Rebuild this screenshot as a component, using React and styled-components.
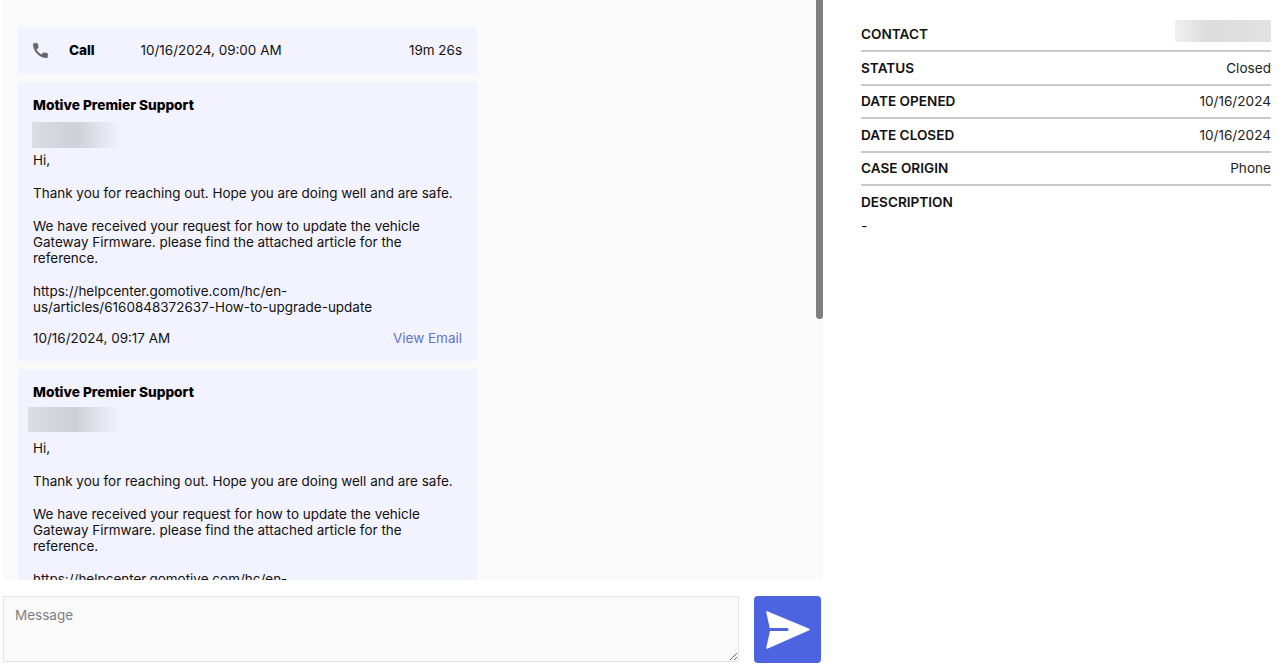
import React from "react";
import styled, { createGlobalStyle } from "styled-components";

const Global = createGlobalStyle`
  html, body { margin: 0; padding: 0; background: #fff; }
  body { font-family: Inter, "Liberation Sans", sans-serif; color: #111; overflow: hidden; }
  * { box-sizing: border-box; }
`;

const Page = styled.div`
  display: flex;
  height: 669px;
  width: 1285px;
  overflow: hidden;
`;
const ChatColumn = styled.div`
  width: 823px;
  padding-left: 3px;
  display: flex;
  flex-direction: column;
  flex: none;
`;
const Feed = styled.div`
  position: relative;
  height: 580px;
  flex: none;
  overflow: hidden;
  background: #fafafa;
  padding: 27px 0 0 15px;
  display: flex;
  flex-direction: column;
  gap: 8px;
`;
const ScrollThumb = styled.div`
  position: absolute;
  top: -8px;
  right: 0;
  width: 7px;
  height: 327px;
  background: #7f7f7f;
  border-radius: 0 0 4px 4px;
`;
const Card = styled.div`
  width: 459px;
  flex: none;
  background: #f3f3ff;
  font-size: 13.47px;
  line-height: 16.35px;
  color: #111;
`;
const CallCard = styled(Card)`
  height: 47px;
  display: flex;
  align-items: center;
  padding: 0 15px;
`;
const CallIcon = styled.svg`
  width: 19px;
  height: 19px;
  fill: #666;
  stroke: #666;
  stroke-width: 0.8;
  stroke-linejoin: round;
  margin-left: -2px;
  flex: none;
`;
const CallLabel = styled.span`
  font-weight: 800;
  font-size: 13.5px;
  margin-left: 19px;
  width: 71.5px;
  color: #000;
`;
const CallDuration = styled.span`
  margin-left: auto;
`;
const MailCard = styled(Card)`
  padding: 15px 15px 0;
  height: 279px;
`;
const Sender = styled.div`
  font-weight: 800;
  font-size: 13.7px;
  color: #000;
`;
const Redaction = styled.div`
  height: ${(p) => p.$h}px;
  width: ${(p) => p.$w}px;
  margin: ${(p) => p.$m};
  background: linear-gradient(90deg, #dcdce3 0%, #cfcfd7 50%, #f3f3ff 100%);
  filter: blur(0.5px);
`;
const Body = styled.div`
  white-space: pre-wrap;
  overflow-wrap: anywhere;
`;
const MailFoot = styled.div`
  display: flex;
  justify-content: space-between;
  margin-top: 14px;
`;
const MailLink = styled.a`
  color: #5f74c9;
`;
const Composer = styled.div`
  flex: 1;
  display: flex;
  align-items: flex-start;
  padding-top: 16px;
  gap: 15px;
`;
const MessageBox = styled.textarea`
  width: 736px;
  height: 66px;
  flex: none;
  resize: vertical;
  margin: 0;
  padding: 10px 11px;
  border: 1px solid #e4e4e4;
  border-radius: 0;
  outline: none;
  background: #fafafa;
  font: 13.5px/17px Inter, "Liberation Sans", sans-serif;
  &::placeholder { color: #808080; }
`;
const SendButton = styled.button`
  width: 67px;
  height: 67px;
  flex: none;
  border: 0;
  padding: 0;
  border-radius: 4px;
  background: #4c64e0;
  display: flex;
  align-items: center;
  justify-content: center;
`;
const Side = styled.aside`
  flex: 1;
  padding: 18.5px 14px 0 38px;
`;
const Row = styled.div`
  display: flex;
  justify-content: space-between;
  align-items: center;
  height: 33.5px;
  border-bottom: 2px solid ${(p) => (p.$plain ? "transparent" : "#c9c9c9")};
  font-size: 13.6px;
`;
const Label = styled.span`
  font-weight: 600;
  color: #111;
`;
const Value = styled.span`
  color: #222;
`;
const ContactRedaction = styled.div`
  width: 96px;
  height: 22px;
  margin-top: -7px;
  background: linear-gradient(90deg, #f0f0f0 0%, #dcdcdc 35%, #e2e2e2 100%);
`;
const Dash = styled.div`
  font-size: 14px;
  margin-top: -2.5px;
`;

const text = `Hi,

Thank you for reaching out. Hope you are doing well and are safe.

We have received your request for how to update the vehicle Gateway Firmware. please find the attached article for the reference.

https://helpcenter.gomotive.com/hc/en-us/articles/6160848372637-How-to-upgrade-update`;

const Mail = ({ m, w, h }) => (
  <MailCard>
    <Sender>Motive Premier Support</Sender>
    <Redaction $h={h} $w={w} $m={m} />
    <Body>{text}</Body>
    <MailFoot>
      <span>10/16/2024, 09:17 AM</span>
      <MailLink>View Email</MailLink>
    </MailFoot>
  </MailCard>
);

const rows = [
  ["STATUS", "Closed"],
  ["DATE OPENED", "10/16/2024"],
  ["DATE CLOSED", "10/16/2024"],
  ["CASE ORIGIN", "Phone"],
];

export default function App() {
  return (
    <Page>
      <Global />
      <ChatColumn>
        <Feed>
          <CallCard>
            <CallIcon viewBox="0 0 24 24">
              <path d="M6.62 10.79c1.44 2.83 3.76 5.14 6.59 6.59l2.2-2.2c.27-.27.67-.36 1.02-.24 1.12.37 2.33.57 3.57.57.55 0 1 .45 1 1V20c0 .55-.45 1-1 1-9.39 0-17-7.61-17-17 0-.55.45-1 1-1h3.5c.55 0 1 .45 1 1 0 1.25.2 2.45.57 3.57.11.35.03.74-.25 1.02l-2.2 2.2z" />
            </CallIcon>
            <CallLabel>Call</CallLabel>
            <span>10/16/2024, 09:00 AM</span>
            <CallDuration>19m 26s</CallDuration>
          </CallCard>
          <Mail m="9px 0 4px -1px" w={88} h={26} />
          <Mail m="7px 0 8px -5px" w={92} h={25} />
          <ScrollThumb />
        </Feed>
        <Composer>
          <MessageBox placeholder="Message" />
          <SendButton aria-label="Send">
            <svg width="46" height="38" viewBox="0 0 46 38">
              <path
                d="M2 1 L44 18.5 L2 37 L6 19 Z"
                fill="#fff"
                stroke="#fff"
                strokeWidth="1.5"
                strokeLinejoin="round"
              />
              <path d="M6 18.5 H22" stroke="#4c64e0" strokeWidth="3" strokeLinecap="round" />
            </svg>
          </SendButton>
        </Composer>
      </ChatColumn>
      <Side>
        <Row>
          <Label>CONTACT</Label>
          <ContactRedaction />
        </Row>
        {rows.map(([l, v]) => (
          <Row key={l}>
            <Label>{l}</Label>
            <Value>{v}</Value>
          </Row>
        ))}
        <Row $plain>
          <Label>DESCRIPTION</Label>
        </Row>
        <Dash>-</Dash>
      </Side>
    </Page>
  );
}
